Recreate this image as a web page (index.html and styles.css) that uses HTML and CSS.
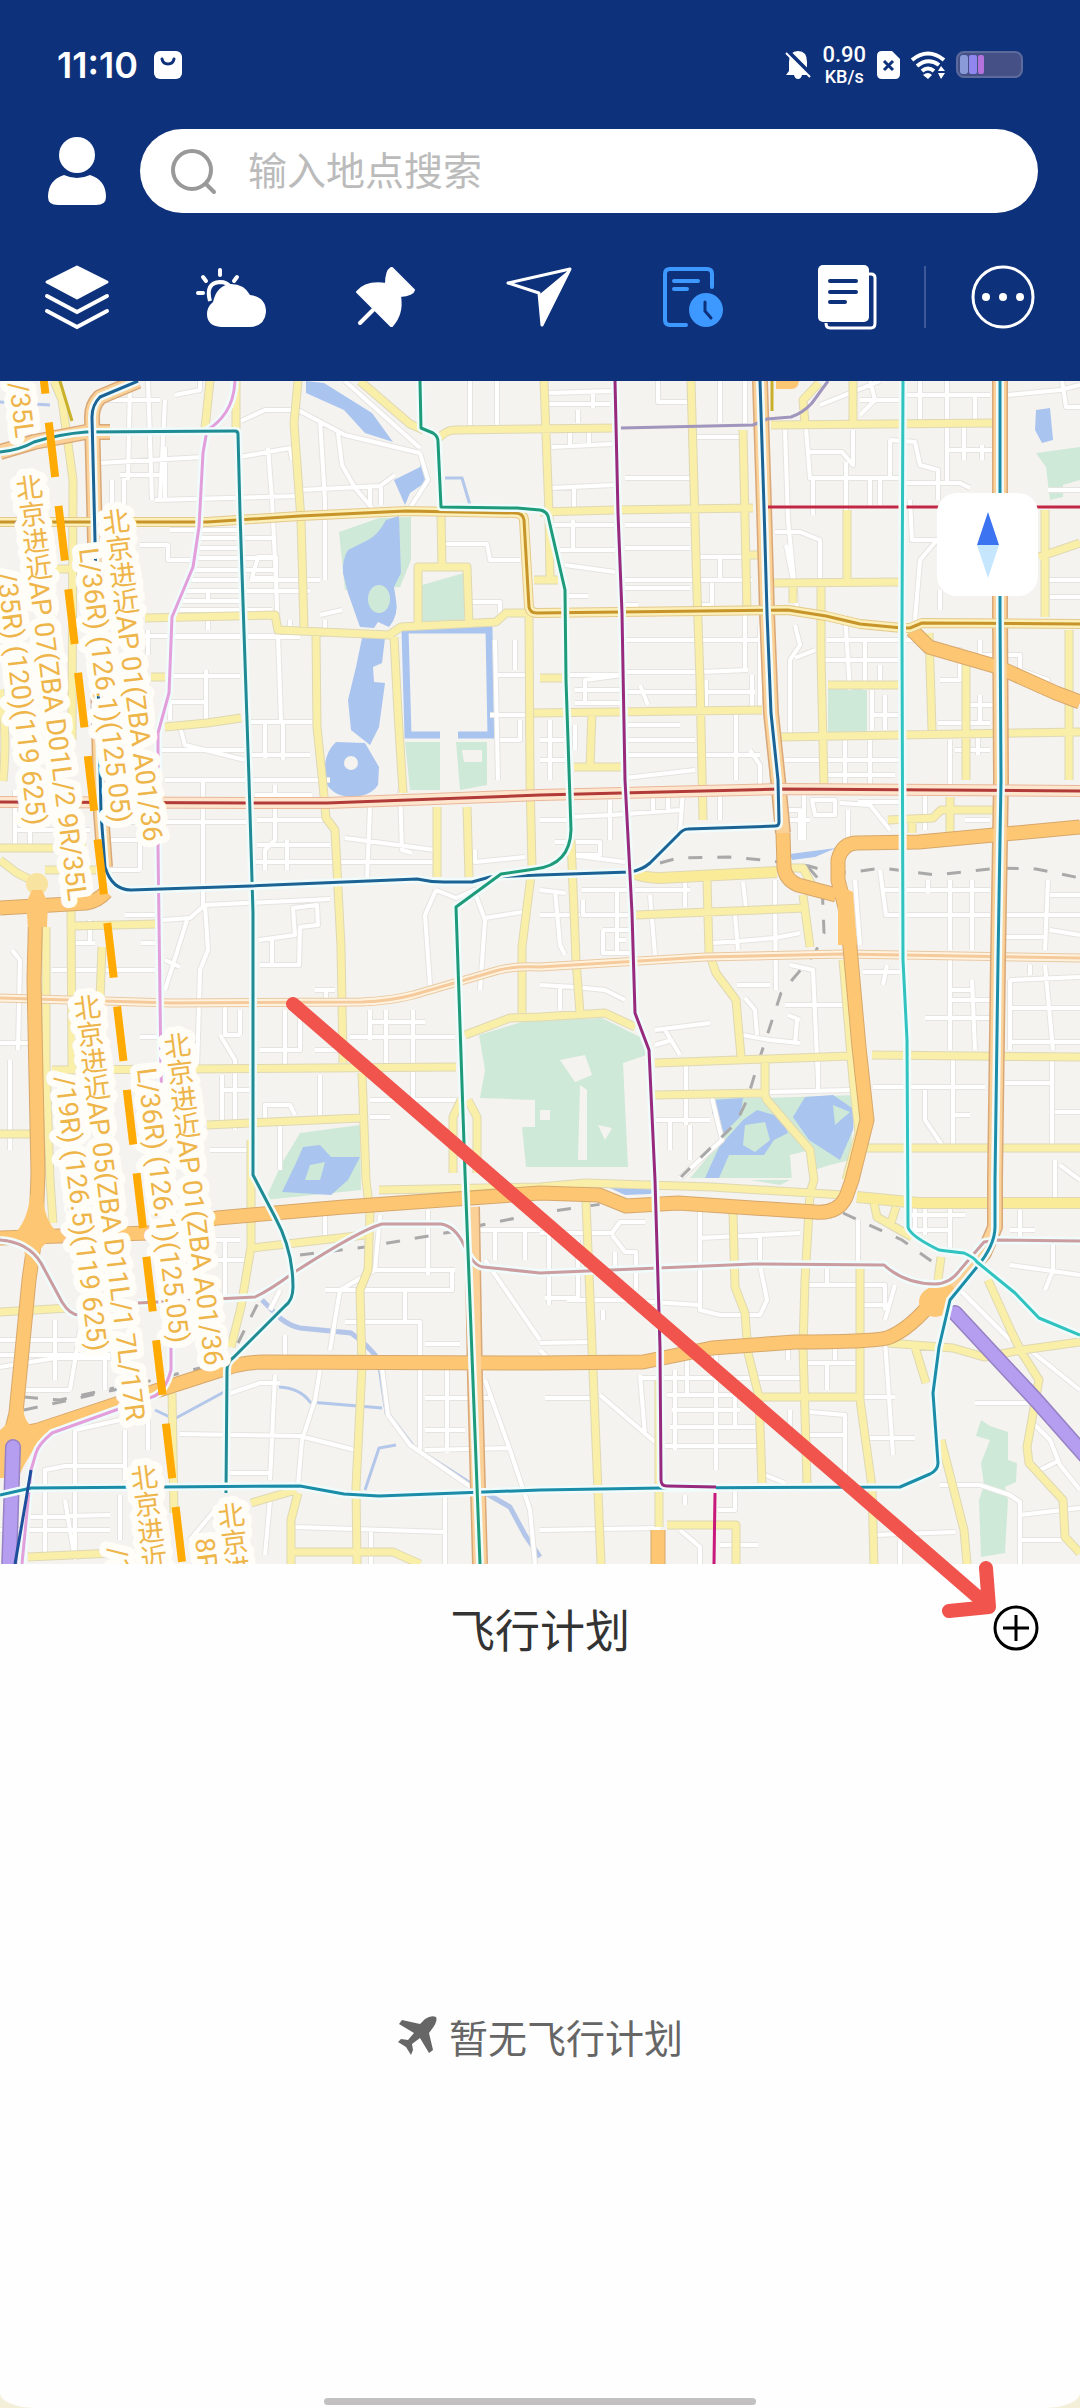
FILE: index.html
```html
<!DOCTYPE html>
<html lang="zh-CN">
<head>
    <meta charset="UTF-8">
    <meta name="viewport" content="width=device-width, initial-scale=1.0">
    <title>飞行计划</title>
    <link rel="stylesheet" href="styles.css">
</head>
<body>

    <div class="screen">
        <header class="header">
            <div class="status-bar">
                <span class="time">11:10</span>
                <svg class="app-badge" viewBox="0 0 28 28" width="28" height="28">
                    <rect width="28" height="28" rx="6" fill="#fff"/>
                    <path d="M8 8 Q9 13 14 13 Q19 13 20 8" fill="none" stroke="#0e317b" stroke-width="3" stroke-linecap="round"/>
                </svg>

                <div class="status-icons">
                    <svg viewBox="0 0 26 28" width="26" height="28">
                        <path d="M4 20 V11 Q4 0 13 0 Q22 0 22 11 V20 L25 24 H17 Q16 28 13 28 Q10 28 9 24 H1 Z" fill="#fff"/>
                        <path d="M1 -1 L27 25" stroke="#0e317b" stroke-width="5"/>
                        <path d="M1 2 L25 26" stroke="#fff" stroke-width="2"/>
                    </svg>
                    <div class="net-speed">
                        <span class="speed">0.90</span>
                        <span class="unit">KB/s</span>
                    </div>
                    <svg viewBox="0 0 23 28" width="23" height="28">
                        <path d="M5 0 H15 L23 8 V23 Q23 28 18 28 H5 Q0 28 0 23 V5 Q0 0 5 0 Z" fill="#fff"/>
                        <path d="M7 10 L16 19 M16 10 L7 19" stroke="#0e317b" stroke-width="3"/>
                    </svg>
                    <svg viewBox="0 0 34 28" width="34" height="28">
                        <g fill="none" stroke="#fff" stroke-width="4">
                            <path d="M1 9 Q17 -4 33 9"/>
                            <path d="M6 15 Q17 6 28 14"/>
                            <path d="M11 20 Q17 15 23 20"/>
                        </g>
                        <path d="M12 24 Q17 20 21 24 L17 28 Z" fill="#fff"/>
                        <path d="M27 20 L30 15 L34 20 Z M27 22 L30 28 L34 22 Z" fill="#fff"/>
                    </svg>
                    <svg viewBox="0 0 67 27" width="67" height="27">
                        <rect x="1" y="1" width="65" height="25" rx="7" fill="#455087" stroke="#5c6b9c" stroke-width="2"/>
                        <rect x="4" y="4" width="8" height="19" rx="3" fill="#8a9ad8"/>
                        <rect x="13" y="4" width="8" height="19" rx="2" fill="#8f86ee"/>
                        <rect x="22" y="4" width="6" height="19" rx="2" fill="#b472dc"/>
                    </svg>
                </div>
            </div>

            <div class="search-row">
                <button class="icon-btn" aria-label="我的">
                    <svg viewBox="0 0 58 68" width="58" height="68" fill="#fff">
                        <ellipse cx="29" cy="18" rx="18" ry="18"/>
                        <path d="M16 38 Q29 44 42 38 Q58 43 58 60 Q58 68 48 68 H10 Q0 68 0 60 Q0 43 16 38 Z"/>
                    </svg>
                </button>
                <label class="search-box" for="search">
                    <svg viewBox="0 0 46 46" width="46" height="46" fill="none" stroke="#999" stroke-width="4" stroke-linecap="round">
                        <circle cx="21" cy="21" r="19"/>
                        <path d="M35 35 L43 43"/>
                    </svg>
                    <input type="text" id="search" placeholder="输入地点搜索" aria-label="输入地点搜索">
                </label>
            </div>

            <nav class="toolbar">
                <div class="tools">
                    <button class="icon-btn" aria-label="图层">
                        <svg viewBox="0 0 64 64" width="64" height="64">
                            <path d="M32 2 L62 17 L32 33 L2 17 Z" fill="#fff" stroke="#fff" stroke-width="3" stroke-linejoin="round"/>
                            <path d="M2 31 L32 47 L62 31 M2 46 L32 62 L62 46" fill="none" stroke="#fff" stroke-width="4" stroke-linecap="round"/>
                        </svg>
                    </button>
                    <button class="icon-btn" aria-label="天气">
                        <svg viewBox="0 0 64 64" width="64" height="64">
                            <path d="M21 5 V10 M4 12 L7 16 M38 12 L35 16 M-1 28 H4" stroke="#fff" stroke-width="4" stroke-linecap="round"/>
                            <path d="M11 36 Q6 18 21 17 Q28 17 31 22" fill="none" stroke="#fff" stroke-width="4"/>
                            <path d="M22 62 Q8 61 8 49 Q8 42 14 37 Q18 20 32 19 Q45 19 51 30 Q67 32 67 47 Q66 61 51 62 Z" fill="#fff"/>
                        </svg>
                    </button>
                    <button class="icon-btn" aria-label="标记">
                        <svg viewBox="0 0 64 64" width="64" height="64">
                            <path d="M39 3 L61 25 Q60 30 47 31 Q50 49 39 61 L38 61 L4 27 Q13 16 33 19 Q33 6 38 3 Z" fill="#fff" stroke="#fff" stroke-width="2" stroke-linejoin="round"/>
                            <path d="M20 45 L7 58" stroke="#fff" stroke-width="4" stroke-linecap="round"/>
                        </svg>
                    </button>
                    <button class="icon-btn" aria-label="导航">
                        <svg viewBox="0 0 64 64" width="64" height="64">
                            <path d="M63 4 L35 60 L32 28 L1 18 Z" fill="none" stroke="#fff" stroke-width="3" stroke-linejoin="round"/>
                            <path d="M63 4 L35 60 L33 29 Z" fill="#fff"/>
                        </svg>
                    </button>
                    <button class="icon-btn" aria-label="飞行计划">
                        <svg viewBox="0 0 64 64" width="64" height="64">
                            <g fill="none" stroke="#3d98ff" stroke-width="4" stroke-linecap="round">
                                <path d="M51 22 V9 Q51 4 46 4 H9 Q4 4 4 9 V55 Q4 60 9 60 H25"/>
                                <path d="M13 16 H37 M13 24 H26"/>
                            </g>
                            <circle cx="45" cy="45" r="17" fill="#3d98ff"/>
                            <path d="M44 37 V46 L50 53" fill="none" stroke="#0e317b" stroke-width="3" stroke-linecap="round"/>
                        </svg>
                    </button>
                    <button class="icon-btn" aria-label="资料">
                        <svg viewBox="0 0 64 64" width="64" height="64">
                            <path d="M54 9 H56 Q60 9 60 13 V58 Q60 63 56 63 H15 Q11 63 11 58" fill="none" stroke="#fff" stroke-width="3"/>
                            <rect x="3" y="0" width="51" height="57" rx="5" fill="#fff"/>
                            <path d="M15 16 H41 M15 27 H41 M15 37 H30" stroke="#0e317b" stroke-width="4" stroke-linecap="round"/>
                        </svg>
                    </button>
                </div>
                <span class="divider"></span>
                <button class="icon-btn" aria-label="更多">
                    <svg viewBox="0 0 64 64" width="64" height="64" fill="#fff">
                        <circle cx="32" cy="32" r="30" fill="none" stroke="#fff" stroke-width="3"/>
                        <circle cx="15" cy="32" r="4"/>
                        <circle cx="32" cy="32" r="4"/>
                        <circle cx="49" cy="32" r="4"/>
                    </svg>
                </button>
            </nav>
        </header>

        <section class="map">
            <svg class="map-canvas" viewBox="0 381 1080 1183">
                <defs>
                    <!-- small streets -->
                    <path id="minor" d="M102 400 H160 M130 381 L128 480 M148 381 L152 500 M165 400 L160 500 M175 395 L200 390 V381 M100 463 L203 457 M240 457 L290 448 L292 460 M112 480 V540 M124 478 V545 M155 500 L300 496 M165 447 V500 M120 475 H160
                        M241 421 L265 410 H298 L345 435 L420 453 M320 420 L325 500 V580 M338 433 L342 465 L355 488 L372 508 M268 448 L272 500 L276 580 L281 720 M300 490 L380 486 L395 475 M370 487 V505 M381 487 V505 M420 453 L428 480 L410 508 M345 381 L420 448
                        M170 530 H240 M198 538 H276 M195 548 H240 M192 558 H275 M190 570 H275 M188 580 H240 M185 591 H310 M183 601 H240 M180 610 H272 M208 590 V600 M140 545 H168 V560 H192 M258 557 H276 V578 H252 Z M320 580 H250
                        M145 636 H275 M148 630 V655 M172 637 H300 M208 620 V630 M290 620 V635 M172 676 H240 M206 670 V720 M166 702 H205 M170 700 V720 M180 727 L185 745 L245 760 M160 750 H245 M165 780 H330 M250 722 H312 M265 722 V758 M283 720 V760 M250 755 H310 M320 615 L342 610 M325 635 V620
                        M445 544 H487 L490 560 H520 M470 602 H500 V613 M495 640 L498 780 M498 675 H530 M515 640 V670 M490 715 H530 M500 740 H520 V720 M470 381 V425 M497 381 V425
                        M548 393 L613 391 M548 404 H610 M593 391 V408 M578 410 V423 M552 447 L612 444 M570 430 V447 M589 430 V445 M550 488 L614 485 M574 488 V510 M550 525 H614 M573 520 V550 M560 550 H615 M565 565 L615 572 M567 596 H588 M625 478 H690 M625 525 H690 M625 548 H690 M625 580 H752 M625 588 H690 M625 605 H638
                        M658 381 V402 H690 M720 381 V423 M745 381 V423 M697 437 H742 M785 430 L788 520 L797 610 M806 428 L810 478 H900 M808 452 H842 L853 465 V430 M846 462 V510 M813 480 V515 M870 477 V505 M880 477 V505 M890 440 V477 M890 440 L915 442 L920 465 L938 470 V500 M905 483 H960 L970 488 M947 381 V485 M947 450 H992 M964 425 V460 M982 445 V460 M920 381 V423 M905 395 H990 M975 395 V420
                        M860 400 H900 M820 405 L850 393 L880 381 M870 381 L875 400 L860 415 M775 532 H800 L820 540 V590 M786 545 L795 590 M698 557 H745 V610 M720 557 V580 M712 583 V605 H700 M910 500 L912 540 H937 L920 560 L915 620 M940 590 V610 M1048 490 H1080 M1048 580 H1080 M1050 597 H1080 M1062 381 L1066 407 H1080 M1008 395 L1060 390 L1080 385
                        M625 640 H760 M625 672 H700 L748 670 M625 692 H755 M640 685 L648 705 M570 675 H622 L585 680 V705 M575 703 H620 M575 690 H622 M745 615 V670 M706 680 V710 M752 675 V710 M760 625 V705 M795 625 L800 645 L790 660 V730 M815 650 L795 658 M845 615 L850 690 M865 640 V690 M825 660 H900 M880 665 V690 M827 640 H925 M872 690 V730 M885 695 V730 M870 715 H905 M790 668 V735
                        M935 650 H960 V680 H940 M980 640 V655 H1020 V670 L1048 680 L1040 695 M980 695 V725 M970 705 H995 M938 723 H990 M550 720 V780 M540 740 H570 M540 760 H565 M575 725 V750 M625 725 H680 M625 740 H695 M625 755 H760 M736 715 V780 M750 750 L760 765 V790 M625 778 L695 770 M845 740 V785 M870 740 V790 M785 760 H900 M825 775 H895 M950 740 V790 M955 750 H990 M978 735 V755
                        M15 790 V850 M30 810 V845 M15 830 H90 M108 822 H250 M140 790 V870 M108 840 H160 M203 780 V910 M108 870 H140 M255 795 H312 M257 820 H330 M275 785 V840 L265 850 V870 M287 840 V870 M255 862 H435 M345 838 L435 850 M370 807 L367 880 M400 790 L402 850 L412 853 M475 850 V862 L525 857 M257 845 H330
                        M125 915 H158 M75 943 H95 M90 920 V943 M163 920 L190 918 L205 905 L330 899 M205 905 L208 950 L200 970 L197 1070 M187 920 L165 990 M165 960 L180 967 M141 943 H158 M259 940 L295 935 L293 908 L317 905 L318 925 L300 927 L299 965 H260 M272 940 V965 M436 890 L425 915 L430 985 M436 890 L456 898 L474 890 L485 920 L480 990 M485 918 L522 912
                        M12 950 L20 960 L18 1050 M0 1043 H30 M10 1060 V1150 M52 970 H155 M140 1037 H160 M225 1003 V1035 H240 M240 1010 V1035 M220 1035 L235 1060 V1130 M285 1010 V1065 M260 1050 H300 V1012 M315 990 H335 M326 990 V1000 M370 1010 V1040 M386 1010 V1065 M413 1010 V1100 M370 1022 H425 M350 1037 H455 M315 1050 H345 M370 1100 H465 M320 1075 V1115 M222 1075 V1120 M222 1090 H250 M265 1120 V1105 H290 L295 1115 M210 1150 H250 M370 1117 H390 M280 1120 V1170
                        M540 820 H570 M555 842 H600 V855 H575 M610 800 V840 M570 817 L612 815 L680 810 M653 795 V812 M668 795 V812 M683 790 L680 830 M570 855 L625 862 M720 795 V820 M788 810 H800 V840 M790 820 H810 M812 800 H835 V815 H815 Z M840 803 L870 805 L890 830 M848 810 V842 M858 802 H900 M804 790 V840 M925 795 V830 M965 820 H990
                        M540 890 L565 893 M555 890 L560 945 L565 955 M540 915 H580 M582 890 H690 M583 900 V915 H630 M617 890 V955 M603 930 H630 M603 930 V953 H630 M618 940 H626 M685 880 V907 M650 895 L655 955 M743 882 L746 908 M775 880 V905 L776 990 M735 915 L738 950 M713 943 L775 938 L800 933 M855 880 L860 945 M880 870 L886 915 H990 M883 890 H990 M928 880 V893 M950 880 V950 M972 880 V950 M1005 915 H1080 M1048 880 L1045 950 M1005 937 H1045 M1050 895 H1080 M1050 930 L1080 935
                        M540 985 L575 987 L605 990 L625 1000 M560 985 V1010 M655 1030 L710 1023 M665 1030 L680 1055 M655 1045 L672 1040 M737 985 H770 M745 998 L755 1010 L757 1035 M790 965 L813 970 L818 1080 M785 1005 H845 M742 1035 L770 1040 L800 1043 M788 1015 L800 1020 M797 1020 L795 1045 M863 972 H900 M887 965 L883 985 M770 1092 L850 1090 M818 1056 V1092 M950 960 V1050 M950 990 H973 M925 1018 H990 M972 980 L975 1050 M950 1000 H990 M1010 980 L1080 977 M1010 980 V1050 M1030 965 V975 M1045 965 L1053 1050 M1008 1008 H1080 M1008 1042 H1080 M1005 1083 H1050 M873 1087 H985 M953 1055 V1145 M925 1090 V1120 L942 1145 M955 1115 H970 M1052 1060 V1145 M1055 1112 H1080
                        M686 1065 V1125 M655 1120 H710 M670 1120 V1150 M690 1125 V1160 M712 1098 L722 1140 L680 1178
                        M325 1215 V1240 M428 1210 V1275 M380 1215 L375 1270 L340 1290 L330 1350 M375 1270 H455 M280 1290 L270 1310 M325 1290 H452 V1270 M495 1230 V1260 M525 1230 V1260 M480 1230 H540 M485 1260 L540 1340 M405 1290 V1320 M345 1322 H420 V1450 M425 1344 H460 M285 1335 V1370 M225 1240 V1300 M210 1260 H245 M240 1240 H215
                        M0 1340 H100 M0 1355 H110 M55 1320 V1380 M80 1330 L70 1390 M105 1340 V1390 M0 1367 L55 1358 H110 M25 1390 H70 M75 1430 L120 1420 M75 1430 V1560 M125 1430 V1480 M148 1420 V1450 M45 1500 V1470 L65 1466 H125 M45 1500 V1560 M28 1517 L110 1515 M120 1495 V1540 M65 1500 L75 1560 M0 1530 H110 M180 1434 L300 1436 L355 1450 M275 1375 L270 1480 M320 1370 L315 1400 L302 1440 L298 1485 M230 1473 H270 M270 1500 L265 1555 M225 1395 L260 1383 H280
                        M382 1368 L388 1415 L410 1445 L475 1490 M425 1398 H490 M447 1370 V1453 M425 1430 H465 M425 1450 L510 1448 M485 1380 L510 1450 L530 1510 L535 1564 M445 1495 V1564 M295 1527 L445 1532 M371 1532 V1564 M190 1540 L215 1510
                        M549 1230 V1305 M540 1233 H612 L620 1222 H645 M612 1235 L625 1252 H636 V1290 M615 1252 V1270 M567 1300 H620 L700 1305 M578 1240 V1298 H545 M603 1310 V1320 M700 1210 V1310 L720 1315 L760 1315 L767 1300 L760 1265 V1235 M700 1238 L800 1233 M827 1265 V1285 M808 1285 H885 V1310 M860 1305 H890 M700 1235 V1310 M895 1285 L885 1320 M858 1220 V1265 M915 1200 V1235 M925 1200 V1235 M950 1205 V1250 M910 1215 H965 M910 1230 H950
                        M540 1343 L590 1342 M540 1350 L555 1365 M600 1395 L655 1442 M640 1375 L645 1435 M675 1370 V1450 M687 1355 V1395 M716 1350 V1470 M640 1378 H800 M667 1395 H757 M672 1410 H740 M670 1427 H755 M665 1446 H757 M735 1390 V1425 M788 1340 V1360 M827 1365 V1390 M808 1363 H855 M835 1335 V1360 M810 1412 L845 1415 V1480 M790 1410 V1430 M845 1435 H810 M870 1438 H915 M885 1340 L893 1455 M540 1530 L660 1528 M680 1530 L700 1547 V1564 M718 1510 H735 V1490 M720 1545 H758 M685 1495 V1505 M545 1398 H590 M765 1475 L785 1483 M860 1397 H895
                        M875 1488 H900 M940 1485 H980 L1010 1495 L1020 1502 V1564 M1020 1515 L1080 1508 M1020 1540 H1062 M975 1403 H1040 M900 1540 V1564 M875 1535 L955 1532 M1030 1420 L1050 1440 L1060 1465 L1080 1490 M1040 1470 L1060 1460 M1010 1265 L1080 1275 M1053 1240 V1270 L1045 1290 M1020 1210 V1240 M1010 1230 H1035 M1030 1350 L1080 1390 M960 1290 L1010 1340 M1055 1160 V1200 M1060 1165 L1080 1180"/>

                    <!-- yellow streets -->
                    <path id="yellow" d="M54 381 L62 400 L73 480 L72 740 M210 381 L205 428 M236 381 V430 M298 381 L294 423 L301 520 L304 627 M360 381 L410 424 L424 430 M437 440 Q445 430 455 430 L617 428 M441 513 L442 567 M418 627 V567 H467 L469 624
                        M145 618 L275 615 L278 630 L389 635 L401 627 L496 622 L506 613 H540 M316 636 L317 727 L323 785 L326 818 L335 830 L341 947 L343 1063 M394 637 L398 713 L403 793 M529 613 L530 780 L532 867 L522 947 V1013 M534 580 H558 M151 677 H165 M165 727 L207 723 L241 718 M52 569 H74 M0 690 Q8 730 3 781
                        M544 381 L549 513 L550 580 M691 381 L697 593 L700 680 L703 820 M707 880 L709 953 L716 973 L736 1000 L741 1057 M743 430 L747 610 M540 512 L614 510 L753 508 M771 425 L993 423 M853 381 V423 M819 383 L803 400 L805 423 M847 510 V580 M774 583 L900 582 M793 587 V603 M821 587 V657 L824 785 M540 678 H562 M534 713 L762 710 M592 712 L590 767 M574 767 H621
                        M828 685 H900 M781 737 L1080 732 M929 633 L932 730 M966 663 V780 M1045 510 V617 M1039 557 L1080 543 M1069 630 V780 M748 555 H759 M571 840 L576 960 L580 1013 M636 915 L805 908 M780 868 H803 L812 885 M803 895 L810 947 M465 1035 L510 1018 L540 1017 L605 1013 L635 1027 M655 1063 L850 1056 M872 1055 L1080 1057 M765 1063 V1093
                        M655 1095 L764 1093 L767 1100 L810 1150 L814 1180 L810 1193 L805 1280 L803 1347 L807 1483 M867 1148 H1080 M843 960 L853 1080 L859 1133 L846 1180 M950 797 V832 M888 820 L933 818 L941 810 H993 M912 820 V833
                        M0 848 H86 M437 807 V877 M467 807 L469 877 M0 860 L17 873 L31 880 M45 870 H96 M71 910 L72 1070 M72 926 L157 924 M46 927 V1063 L50 1180 L53 1223 M102 947 L100 1000 M52 1070 L456 1067 M362 1073 L366 1180 L370 1213 L368 1270 L360 1290 L362 1367 L356 1487 L357 1564 M207 1125 L360 1118 M0 1134 H31
                        M461 1100 L453 1117 V1173 M468 1100 L477 1117 V1173 M251 1140 V1247 L241 1307 L231 1347 M251 1248 L365 1235 M0 1312 L69 1308 M172 1393 L174 1513 M251 1503 L296 1490 M298 1493 L291 1520 V1564 M28 1557 L114 1553 M293 1552 H393 L420 1564 M379 1190 L540 1187 L585 1183 L712 1187 L843 1195
                        M586 1202 L592 1347 L601 1564 M659 1380 V1527 M733 1213 L735 1287 L745 1313 L748 1353 L759 1397 L762 1483 M860 1267 V1400 L872 1487 L874 1564 M759 1397 H857 M667 1525 H736 V1564 M874 1203 L877 1217 L912 1237 M896 1207 L891 1223 M941 1257 L938 1280
                        M988 1280 L1012 1333 L1022 1353 L1039 1380 L1027 1447 L1029 1463 L1063 1500 L1065 1537 L1080 1553 M888 1343 L953 1348 L984 1357 L1022 1350 L1080 1342 M915 1347 L926 1383 M941 1440 L964 1530 L967 1564"/>
                    <path id="yellow-wide" d="M633 873 Q645 878 660 878 L757 873 L777 872 M857 1197 L919 1203 H1080"/>

                    <!-- ring roads -->
                    <path id="ring" d="M0 908 L86 903 Q98 901 106 892 M36 900 L34 980 L38 1173 L36 1230 L29 1280 L16 1413 L8 1445 M0 1238 L148 1233 L217 1218 L344 1207 L540 1193 L599 1195 L626 1206 L678 1203 L815 1212 Q838 1214 846 1197 L852 1180 L867 1120 L859 1047 L850 947 L845 907 L838 880 V860 Q842 843 857 843 L919 842 L1080 827
                        M783 833 L784 868 Q786 880 798 885 L836 895 M912 630 L929 647 L998 667 L1056 693 L1080 702 M953 1287 L936 1297 Q910 1330 887 1338 Q870 1342 795 1342 L712 1348 L643 1362 L540 1363 L262 1362 Q240 1363 227 1368 L165 1388 L38 1430 L0 1438 M658 1530 V1564"/>
                    <path id="corridor" d="M138 381 L100 397 Q92 405 92 417 L95 540 L101 813 L105 867 M0 452 L34 442 L86 432 H110 M760 381 L764 507 L767 613 L771 713 L778 780 L783 833 M1000 381 V613 L1001 780 L998 960 L995 1180 V1227 L984 1253 L953 1287 M472 1207 L475 1380 L480 1564"/>

                    <!-- boulevards running west to east -->
                    <path id="red-line" d="M0 802 L251 803 L327 803 L540 795 L781 789 L1080 791"/>
                    <path id="pale-line" d="M0 998 L172 1003 L362 1002 Q390 1001 413 995 L499 970 Q515 966 540 967 L705 957 L843 954 L1080 958"/>
                    <path id="gold-line" d="M0 522 H207 L300 516 L406 511 L515 513 Q523 513 524 520 L529 607 Q530 613 537 613 L788 610 L826 616 L860 624 L902 628 H910 L922 623 L1080 624"/>

                    <!-- metro -->
                    <path id="metro-blue" d="M138 381 L100 397 Q92 405 92 417 L95 540 L101 813 L105 867 Q112 890 131 890 L251 886 L417 879 Q430 882 444 882 H472 L490 877 L540 875 L630 872 Q642 870 650 863 L678 835 Q683 829 688 829 L775 826 Q779 826 779 822 L778 780 L771 713 L767 613 L764 507 L760 381"/>
                    <path id="metro-teal" d="M0 452 Q20 450 34 442 Q60 434 86 432 L235 431 Q238 431 238 434 L240 513 L249 780 L253 913 V1175 L275 1217 Q293 1250 293 1287 Q293 1300 285 1306 L234 1357 Q227 1362 227 1370 L226 1493"/>
                    <path id="metro-green" d="M420 381 L421 428 L433 433 Q438 436 438 442 L441 507 L517 508 L540 510 Q546 511 548 516 L565 590 L566 680 L571 830 Q570 865 535 869 L501 874 L456 907 L465 1173 L480 1564"/>
                    <path id="metro-magenta" d="M615 381 L618 513 L622 613 L625 780 L632 913 L635 1013 L649 1050 L655 1180 L660 1347 L661 1480 Q661 1486 667 1486 L716 1487"/>
                    <path id="metro-ring" d="M0 1495 L31 1488 L300 1486 L344 1494 L379 1496 L540 1490 L661 1488 L900 1487 L930 1474 Q938 1470 938 1463 L933 1393 L939 1347 L950 1300 L977 1267 Q995 1245 995 1227 V1180 L998 960 L1001 780 L1000 613 V381"/>
                    <path id="metro-cyan" d="M903 381 L902 630 L903 960 L907 1040 L908 1227 Q910 1236 939 1250 Q955 1252 964 1253 Q975 1258 977 1262 L1015 1293 L1039 1318 L1080 1335"/>
                    <path id="metro-pink" d="M235 381 Q234 400 226 412 Q218 424 207 430 L203 453 L199 527 L193 567 L172 617 L169 693 L158 733 V847 L161 1073 L171 1337 V1370 Q165 1393 152 1397 L52 1433 Q38 1445 36 1453 L31 1470 L22 1564"/>
                    <path id="metro-mauve" d="M0 1240 Q28 1242 41 1263 L62 1302 Q70 1315 79 1315 M138 1303 L255 1297 Q270 1290 293 1273 Q360 1230 382 1224 H441 Q455 1226 464 1245 Q473 1266 483 1267 L540 1273 L753 1264 L884 1265 Q905 1284 935 1284 Q950 1284 960 1270 L984 1242 L998 1240 L1080 1241"/>
                </defs>

                <rect y="381" width="1080" height="1183" fill="#f5f3ef"/>

                <g class="park">
                    <path d="M339 532 L379 518 L411 517 V560 L400 587 L345 590 Z"/>
                    <path d="M422 585 L464 573 V621 H422 Z"/>
                    <path d="M405 742 L440 742 V790 H410 Z M456 742 H487 V785 L460 790 Z"/>
                    <path d="M828 688 H867 V732 H828 Z"/>
                    <path d="M1036 453 L1080 447 V480 L1063 485 V497 L1050 500 L1046 467 Z"/>
                    <path d="M479 1035 L525 1021 L602 1018 L640 1037 L647 1055 L623 1063 L628 1167 H526 L522 1127 H535 V1100 L480 1098 L485 1070 Z"/>
                    <path d="M712 1098 L764 1098 L855 1095 L850 1160 L830 1165 L790 1178 H690 L722 1140 Z"/>
                    <path d="M300 1133 L360 1125 L361 1190 L265 1200 L282 1163 Z"/>
                    <path d="M981 1420 L990 1426 L1008 1432 V1460 L1017 1463 L1016 1482 L1005 1487 L1008 1500 L1005 1553 L981 1557 L979 1500 L984 1485 L981 1463 L990 1440 L976 1436 Z"/>
                    <path d="M750 1180 L790 1180 L780 1185 Z"/>
                </g>
                <g fill="#f5f3ef">
                    <path d="M560 1060 L585 1055 L592 1075 L575 1082 Z M580 1085 L587 1090 V1160 H578 Z M540 1110 H550 V1120 H540 Z M598 1125 L612 1128 L605 1140 Z M462 750 H482 V762 H464 Z M790 1155 L810 1150 V1180 H792 Z"/>
                </g>
                <g class="water">
                    <path d="M306 381 L324 383 L372 413 L393 442 L365 433 L344 410 L306 393 Z"/>
                    <path d="M423 455 L429 480 L410 493 L405 505 L394 480 L420 467 Z"/>
                    <path d="M399 516 L386 520 Q378 535 368 540 L348 550 Q342 560 343 573 L348 593 L360 627 L374 628 L378 622 L389 627 Q399 615 396 600 L394 587 L401 573 Z"/>
                    <path d="M362 638 H385 L382 663 L373 667 L374 682 L385 683 L379 727 L370 745 L351 730 L348 700 L356 667 Z"/>
                    <path d="M336 742 L365 743 L379 767 L378 785 Q370 797 350 797 Q330 795 325 780 Q322 755 336 742 Z"/>
                    <path d="M1036 410 L1050 408 L1053 440 L1042 443 L1035 430 Z"/>
                    <path d="M712 1100 L743 1098 L740 1117 L724 1133 L712 1113 Z"/>
                    <path d="M757 1110 L781 1117 L788 1133 L774 1140 L764 1155 L729 1155 L719 1178 H705 L719 1147 L743 1120 Z"/>
                    <path d="M805 1097 L833 1095 L855 1110 L853 1130 L840 1160 L809 1140 L793 1117 Z"/>
                    <path d="M303 1147 L320 1145 L331 1157 L360 1157 L348 1180 L331 1195 L282 1192 L296 1163 Z"/>
                    <path d="M790 854 L836 848 L815 857 L792 860 Z M610 1188 L670 1186 L650 1194 L625 1195 Z"/>
                </g>
                <g class="park">
                    <ellipse cx="379" cy="599" rx="11" ry="14"/>
                    <path d="M745 1125 L765 1122 L770 1140 L755 1152 L743 1145 Z M833 1105 L850 1112 L835 1125 Z M310 1165 L325 1162 L320 1180 L305 1180 Z"/>
                </g>
                <circle cx="351" cy="763" r="7" fill="#f5f3ef"/>
                <path class="moat" d="M440 735 H408 L405 630 H489 L491 735 H458"/>
                <path class="river" d="M262 1300 L280 1318 Q290 1326 300 1328 L351 1333 Q368 1345 379 1360 L387 1413 L413 1447 L475 1487 L510 1507 L525 1535 L540 1557"/>
                <path class="stream" d="M279 1387 Q300 1388 310 1402 L382 1408 M396 1445 L379 1448 L365 1490 M176 1418 L224 1392 M155 1410 L172 1418 M445 478 H462 L470 505 M0 402 L50 405"/>

                <use href="#minor" class="minor-casing"/>
                <use href="#minor" class="minor-fill"/>

                <g class="rail">
                    <path d="M660 863 L678 858 L729 857 L764 860 L809 866 L833 873 L853 872 L881 868 L936 875 L998 868 L1036 869 L1080 878"/>
                    <path d="M808 867 L822 883 L824 933 L815 953 L781 993 L760 1057 L747 1100 L736 1123 L681 1177"/>
                    <path d="M24 1410 L114 1390 L200 1368 M24 1397 L60 1400 L114 1388 M238 1343 L258 1303 M300 1255 L365 1247 L451 1232 L482 1225 L540 1213 L609 1203 M843 1213 L902 1240 L934 1263"/>
                </g>

                <use href="#yellow" class="yellow-casing"/>
                <use href="#yellow-wide" class="yellow-wide-casing"/>
                <use href="#yellow" class="yellow-fill"/>
                <use href="#yellow-wide" class="yellow-wide-fill"/>
                <circle cx="37" cy="884" r="11" fill="#f9e3a0"/>

                <use href="#pale-line" class="pale-casing"/>
                <use href="#pale-line" class="pale-bed"/>
                <use href="#pale-line" class="pale-fill"/>

                <use href="#ring" class="ring-casing"/>
                <use href="#corridor" class="corridor-casing"/>
                <use href="#ring" class="ring-fill"/>
                <use href="#corridor" class="corridor-fill"/>
                <g fill="#fdc673">
                    <path d="M838 885 L853 892 L857 945 L838 945 Z"/>
                    <path d="M26 903 L32 890 H42 L48 903 L47 927 H28 Z"/>
                    <path d="M12 1236 Q28 1222 30 1195 H43 Q44 1224 62 1236 Q38 1240 34 1268 H27 Q26 1244 12 1236 Z"/>
                    <path d="M0 1430 Q12 1422 14 1400 H23 Q22 1424 36 1428 L50 1430 Q30 1450 18 1478 L0 1478 Z"/>
                    <ellipse cx="935" cy="1302" rx="16" ry="15"/>
                    <path d="M776 381 H799 Q798 390 790 389 H776 Z"/>
                </g>

                <path d="M13 1447 L9 1570" class="purple-casing"/>
                <path d="M955 1313 L1036 1400 L1090 1461" class="purple-casing"/>
                <path d="M13 1447 L9 1570" class="purple-fill"/>
                <path d="M955 1313 L1036 1400 L1090 1461" class="purple-fill"/>

                <use href="#red-line" class="boulevard-casing"/>
                <use href="#red-line" class="boulevard-bed"/>
                <use href="#red-line" class="line" stroke="#b23a38"/>
                <use href="#gold-line" class="gold-casing"/>
                <use href="#gold-line" class="gold-bed"/>
                <use href="#gold-line" class="line" stroke="#c7942a"/>

                <path class="line" d="M766 507 H1080" stroke="#c22845"/>
                <path class="line" d="M621 428 L753 425 L767 419 L791 417 Q803 413 812 403 L828 381" stroke="#9f95bd"/>
                <path class="line" d="M714 1564 L715 1493" stroke="#c8187c"/>
                <path class="line" d="M772 381 V411 M60 381 L72 421" stroke="#c9b02a"/>

                <use href="#metro-mauve" class="halo"/>
                <use href="#metro-mauve" class="line" stroke="#cb9da0"/>
                <use href="#metro-pink" class="halo"/>
                <use href="#metro-pink" class="line" stroke="#e29fdb"/>
                <use href="#metro-teal" class="halo"/>
                <use href="#metro-teal" class="line" stroke="#1f8b94"/>
                <use href="#metro-blue" class="halo"/>
                <use href="#metro-blue" class="line" stroke="#1b6394"/>
                <use href="#metro-ring" class="halo"/>
                <use href="#metro-ring" class="line" stroke="#1b8da8"/>
                <use href="#metro-green" class="halo"/>
                <use href="#metro-green" class="line" stroke="#1d9b7a"/>
                <use href="#metro-magenta" class="halo"/>
                <use href="#metro-magenta" class="line" stroke="#982a7e"/>
                <use href="#metro-cyan" class="halo"/>
                <use href="#metro-cyan" class="line" stroke="#30c3bf"/>
                <path class="line" d="M31 1470 L26 1500 L15 1564" stroke="#1d4f9c"/>

                <!-- approach sectors -->
                <g class="sector-text">
                    <text transform="translate(18 382) rotate(-7)">/35L</text>
                    <text transform="translate(25 474) rotate(-7)">北京进近AP 07(ZBA D01L/2 9R/35L</text>
                    <text transform="translate(6 572) rotate(-7)">/35R) (120)(119 625)</text>
                    <text transform="translate(112 508) rotate(-7)">北京进近AP 01(ZBA A01/36</text>
                    <text transform="translate(88 548) rotate(-7)">L/36R) (126.1)(125 05)</text>
                    <text transform="translate(83 994) rotate(-7)">北京进近AP 05(ZBA D11L/1 7L/17R</text>
                    <text transform="translate(64 1076) rotate(-7)">/19R) (126.5)(119 625)</text>
                    <text transform="translate(173 1032) rotate(-7)">北京进近AP 01(ZBA A01/36</text>
                    <text transform="translate(146 1068) rotate(-7)">L/36R) (126.1)(125.05)</text>
                    <text transform="translate(140 1464) rotate(-7)">北京进近</text>
                    <text transform="translate(117 1547) rotate(-7)">/1</text>
                    <text transform="translate(227 1502) rotate(-7)">北京进</text>
                    <text transform="translate(204 1538) rotate(-7)">8R</text>
                </g>
                <path class="sector-border" d="M39 339 L183 1570"/>
            </svg>

            <button class="compass" aria-label="指北针">
                <svg viewBox="0 0 24 66" width="24" height="66">
                    <path d="M12 0 L23 33 H1 Z" fill="#3c73f0"/>
                    <path d="M1 33 H23 L12 66 Z" fill="#c5e6fd"/>
                </svg>
            </button>
        </section>

        <main class="sheet">
            <div class="sheet-head">
                <h1>飞行计划</h1>
                <button class="icon-btn" aria-label="新建飞行计划">
                    <svg viewBox="0 0 46 46" width="46" height="46" fill="none" stroke="#000" stroke-width="3">
                        <circle cx="23" cy="23" r="21"/>
                        <path d="M10 23 H36 M23 10 V36"/>
                    </svg>
                </button>
            </div>
            <div class="empty">
                <svg viewBox="0 0 40 40" width="40" height="40" fill="#666">
                    <path d="M39 1 Q41 5 35 13 L32 17 L36 34 L32 37 L23 22 L15 28 L16 34 L14 39 L9 31 L1 26 L4 23 L11 24 L17 17 L2 8 L5 4 L23 8 L28 3 Q34 -1 39 1 Z"/>
                </svg>
                <p>暂无飞行计划</p>
            </div>
            <div class="home-bar"></div>
        </main>

        <svg class="hint-arrow" viewBox="0 0 1080 2408" aria-hidden="true">
            <path d="M293 1004 L987 1605 M986 1568 L989 1607 L949 1611"/>
        </svg>
    </div>

</body>
</html>
```
FILE: styles.css
```css
* {
    margin: 0;
    padding: 0;
    box-sizing: border-box;
}

body {
    background: #f4efd8;
    font-family: Roboto, "Noto Sans CJK SC", sans-serif;
}

button {
    border: none;
    background: none;
    cursor: pointer;
}

svg {
    display: block;
    overflow: visible;
}

.screen {
    position: relative;
    display: flex;
    flex-direction: column;
    min-height: 100vh;
    overflow: hidden;
}

/* Header */
.header {
    background: #0e317b;
    color: white;
}

.status-bar {
    display: flex;
    align-items: center;
    height: 129px;
    padding: 0 57px;
}

.time {
    font-family: Inter, sans-serif;
    font-size: 36px;
    line-height: 40px;
    font-weight: 600;
}

.app-badge {
    margin-left: 16px;
}

.status-icons {
    display: flex;
    align-items: center;
    gap: 11px;
    margin-left: auto;
}

.net-speed {
    display: flex;
    flex-direction: column;
    align-items: center;
    font-weight: 500;
}

.speed {
    font-size: 22px;
    line-height: 24px;
}

.unit {
    font-size: 18px;
    line-height: 20px;
}

.search-row {
    display: flex;
    align-items: center;
    gap: 34px;
    padding: 0 42px 0 48px;
}

.search-box {
    flex: 1;
    display: flex;
    align-items: center;
    gap: 31px;
    height: 84px;
    padding: 2px 31px 0;
    border-radius: 42px;
    background: white;
}

.search-box input {
    flex: 1;
    min-width: 0;
    border: none;
    outline: none;
    background: none;
    font-family: inherit;
    font-size: 39px;
    color: #333;
}

.search-box input::placeholder {
    color: #bbb;
}

.toolbar {
    display: flex;
    align-items: center;
    gap: 45px;
    height: 168px;
    padding: 0 45px;
}

.tools {
    flex: 1;
    display: flex;
    justify-content: space-between;
}

.divider {
    width: 2px;
    height: 62px;
    background: #3c5896;
}

/* Map */
.map {
    position: relative;
}

.map-canvas {
    width: 100%;
    height: auto;
    overflow: hidden;
}

.map-canvas use,
.line,
.halo {
    fill: none;
    stroke-linejoin: round;
}

.park {
    fill: #cfe9d8;
}

.water {
    fill: #a9c4ef;
}

.moat,
.river,
.stream,
.rail {
    fill: none;
}

.moat {
    stroke: #a9c4ef;
    stroke-width: 7;
}

.river {
    stroke: #b3c5e8;
    stroke-width: 5;
}

.stream {
    stroke: #b3c7ea;
    stroke-width: 3;
}

.rail {
    stroke: #a9a9a9;
    stroke-width: 3;
    stroke-dasharray: 14 15;
}

.minor-casing {
    stroke: #e6e4e0;
    stroke-width: 6;
}

.minor-fill {
    stroke: #fff;
    stroke-width: 4;
}

.yellow-casing {
    stroke: #dfd8b4;
    stroke-width: 9;
}

.yellow-fill {
    stroke: #f9efa8;
    stroke-width: 7;
}

.yellow-wide-casing {
    stroke: #dfd8b4;
    stroke-width: 12;
}

.yellow-wide-fill {
    stroke: #faeb98;
    stroke-width: 10;
}

.pale-casing {
    stroke: #e8c9a4;
    stroke-width: 9;
}

.pale-bed {
    stroke: #fff3df;
    stroke-width: 7;
}

.pale-fill {
    stroke: #f5cb9d;
    stroke-width: 3;
}

.ring-casing {
    stroke: #d7a86c;
    stroke-width: 15;
}

.ring-fill {
    stroke: #fdc673;
    stroke-width: 13;
}

.corridor-casing {
    stroke: #d9a878;
    stroke-width: 16;
}

.corridor-fill {
    stroke: #fbd197;
    stroke-width: 13;
}

.purple-casing,
.purple-fill {
    fill: none;
    stroke: #9682c4;
    stroke-width: 16;
    stroke-linecap: round;
}

.purple-fill {
    stroke: #b59df0;
    stroke-width: 13;
}

.boulevard-casing {
    stroke: #e9b79a;
    stroke-width: 12;
}

.boulevard-bed {
    stroke: #fde6cd;
    stroke-width: 10;
}

.gold-casing {
    stroke: #e3c98c;
    stroke-width: 10;
}

.gold-bed {
    stroke: #fcefb8;
    stroke-width: 8;
}

.line {
    stroke-width: 3;
}

.halo {
    stroke: #f0fbfb;
    stroke-width: 8;
}

.sector-text text {
    writing-mode: vertical-rl;
    font-size: 27px;
    fill: #eeb54a;
    stroke: #fffdf8;
    stroke-width: 14;
    stroke-linejoin: round;
    paint-order: stroke;
}

.sector-border {
    fill: none;
    stroke: #ffaa05;
    stroke-width: 8;
    stroke-dasharray: 55 29;
}

.compass {
    position: absolute;
    top: 112px;
    right: 42px;
    display: flex;
    align-items: center;
    justify-content: center;
    width: 101px;
    height: 103px;
    border-radius: 20px;
    background: white;
}

/* Flight plan sheet */
.sheet {
    flex: 1;
    display: flex;
    flex-direction: column;
    background: #fefefe;
    border-radius: 0 0 35px 35px / 0 0 15px 15px;
}

.sheet-head {
    display: grid;
    grid-template-columns: 1fr auto 1fr;
    align-items: center;
    height: 128px;
    padding: 0 41px;
}

.sheet-head h1 {
    grid-column: 2;
    font-size: 45px;
    font-weight: 400;
    color: #333;
}

.sheet-head .icon-btn {
    justify-self: end;
}

.empty {
    flex: 1;
    display: flex;
    align-items: center;
    justify-content: center;
    gap: 12px;
    font-size: 39px;
    color: #666;
}

.home-bar {
    align-self: center;
    width: 40%;
    height: 7px;
    margin: 18px 0 3px;
    border-radius: 4px;
    background: #c2c0c1;
}

/* Pointer to the add button */
.hint-arrow {
    position: absolute;
    top: 0;
    left: 0;
    width: 100%;
    pointer-events: none;
    fill: none;
    stroke: #f0544c;
    stroke-width: 14;
    stroke-linecap: round;
    stroke-linejoin: round;
}
```
